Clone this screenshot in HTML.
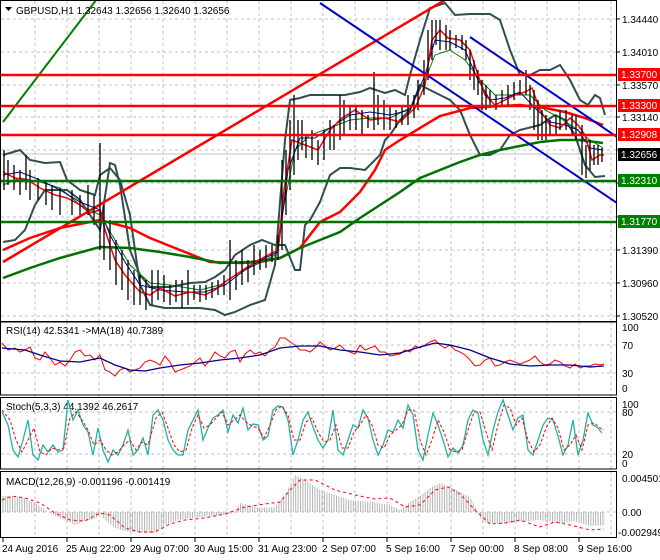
<!DOCTYPE html>
<html><head><meta charset="utf-8"><style>
body{margin:0;background:#fff;width:660px;height:560px;overflow:hidden}
svg{display:block;font-family:"Liberation Sans",sans-serif}
text{font-size:10px}
</style></head><body>
<svg width="660" height="560" viewBox="0 0 660 560" xmlns="http://www.w3.org/2000/svg">
<defs>
<pattern id="hs" width="2.4" height="10" patternUnits="userSpaceOnUse"><rect x="0" y="0" width="1" height="10" fill="#b4b4b4"/></pattern>
<clipPath id="cm"><rect x="1" y="1" width="615" height="321"/></clipPath>
</defs>
<g stroke="#c0c0c0" stroke-dasharray="3,3" stroke-width="1">
<path d="M35 1V322M67 1V322M99 1V322M131 1V322M163 1V322M195 1V322M227 1V322M259 1V322M291 1V322M323 1V322M355 1V322M387 1V322M419 1V322M451 1V322M483 1V322M515 1V322M547 1V322M579 1V322M611 1V322"/>
<path d="M35 322V538M67 322V538M99 322V538M131 322V538M163 322V538M195 322V538M227 322V538M259 322V538M291 322V538M323 322V538M355 322V538M387 322V538M419 322V538M451 322V538M483 322V538M515 322V538M547 322V538M579 322V538M611 322V538"/>
<path d="M1 19H616M1 52H616M1 85H616M1 117H616M1 150H616M1 183H616M1 217H616M1 250H616M1 283H616M1 316H616"/>
<path d="M1 345H616M1 373H616M1 412H616M1 454H616M1 512H616"/>
</g>
<g clip-path="url(#cm)" fill="none">
<line x1="1" y1="154" x2="616" y2="154" stroke="#c0c0c0"/>
<!-- bollinger -->
<polyline stroke="#2f4f4f" stroke-width="2" points="3,155 20,150 30,160 45,163 60,162 67,180 80,190 95,195 100,175 110,168 120,180 130,215 140,285 150,305 165,308 180,308 200,308 215,310 225,315 235,312 250,305 265,300 275,265 285,140 290,100 300,98 310,95 330,95 345,95 360,92 370,88 385,93 395,90 405,95 410,75 420,40 430,8 445,3 455,15 470,14 490,14 500,20 510,50 520,75 530,75 540,70 550,70 560,65 570,80 580,100 588,105 595,95 600,98 605,115"/>
<polyline stroke="#2f4f4f" stroke-width="2" points="3,242 15,240 25,230 35,205 45,190 60,190 67,190 80,200 90,215 100,230 110,163 115,165 120,185 130,250 140,275 150,287 170,287 190,283 205,282 215,277 225,270 235,255 250,245 262,240 275,245 285,245 295,270 300,270 305,225 310,220 320,202 330,175 340,168 350,168 365,170 380,155 385,140 390,135 400,120 410,110 420,85 430,90 440,95 450,100 460,110 470,135 480,155 490,155 500,150 510,135 520,130 540,125 555,115 565,120 575,135 585,165 595,177 605,176"/>
<!-- trend lines -->
<line x1="3" y1="122" x2="100" y2="-5" stroke="#008000" stroke-width="2"/>
<line x1="3" y1="262" x2="450" y2="-3" stroke="#ff0000" stroke-width="2.5"/>
<!-- MAs -->
<polyline stroke="#ff0000" stroke-width="2.5" points="3,250 30,238 60,228 100,220 130,228 150,238 180,250 210,262 240,263 260,262 280,258 300,248 320,222 340,212 360,192 375,170 385,150 400,140 420,128 440,116 470,108 500,106 520,105 545,108 565,112 585,118 603,125"/>
<polyline stroke="#007000" stroke-width="2.5" points="3,278 30,268 60,258 100,247 130,248 160,252 190,257 220,263 250,262 280,258 300,248 320,240 340,232 360,218 380,205 400,192 420,178 440,170 460,162 480,155 500,150 520,146 540,142 560,140 580,140 603,143"/>
<polyline stroke="#008000" stroke-width="1" points="3,185 20,178 40,182 60,188 80,205 100,215 115,240 130,265 150,283 170,285 200,290 220,285 240,272 262,262 275,255 285,200 295,150 310,135 330,128 350,120 370,118 390,118 410,108 425,80 435,55 450,50 465,60 480,80 495,95 510,95 530,95 545,110 560,118 575,128 590,140 603,148"/>
<polyline stroke="#00008b" stroke-width="1" points="3,175 20,172 40,180 60,190 80,202 100,210 110,235 125,262 140,285 160,290 185,292 205,292 225,285 245,270 265,258 278,252 288,170 300,138 315,138 330,128 350,115 370,112 390,115 410,110 425,75 435,40 450,42 465,50 478,80 490,100 505,98 520,92 535,108 550,122 565,125 578,130 590,148 603,150"/>
<!-- price -->
<polyline stroke="#ff0000" stroke-width="1.5" points="3,172 15,178 28,180 40,188 55,195 67,198 80,205 90,213 100,210 105,230 115,260 125,275 140,292 150,295 160,288 175,296 190,292 205,295 215,290 225,282 240,272 255,262 268,255 278,250 284,190 292,140 305,145 318,150 330,130 342,118 355,110 370,120 385,118 400,122 415,108 425,85 432,40 440,30 448,38 460,40 470,50 478,75 485,95 495,105 505,100 515,95 525,92 532,88 540,110 550,125 560,128 570,118 578,125 585,135 592,160 600,155 604,155"/>
<g stroke="#000" stroke-width="1.3">
<path d="M4 150V190M8 160V185M14 165V190M20 170V195M26 155V190M30 170V200M38 178V200M46 180V205M52 185V210M60 188V215M72 190V215M80 195V215M88 185V215M94 195V225M100 143V250M104 205V260M110 220V270M116 240V285M122 250V290M128 260V300M134 270V305M140 275V305M146 280V310M152 270V305M158 270V300M164 275V302M170 285V305M176 280V302M182 280V308M188 270V305M194 285V300M200 285V302M206 285V300M212 282V298M218 280V295M224 275V295M230 240V300M236 260V290M242 250V285M248 260V282M254 245V275M260 250V270M266 245V268M272 245V262M278 235V260M282 160V250M286 150V215M290 120V190M294 95V175M298 120V160M302 120V150M306 135V158M312 130V160M318 140V165M324 130V160M330 120V150M334 125V150M340 95V140M344 100V135M350 105V130M356 105V130M362 110V135M368 115V128M374 72V130M378 95V125M384 100V130M390 105V130M396 110V128M402 105V125M408 95V125M414 95V118M418 80V110M424 60V95M428 30V80M432 20V60M436 20V45M440 20V50M446 25V50M450 30V50M456 35V48M462 35V50M466 40V60M470 50V80M474 60V90M478 70V95M482 80V110M486 85V110M490 90V105M496 95V110M502 90V105M508 85V105M514 82V100M520 80V95M526 70V95M530 85V110M534 90V130M538 100V140M542 110V140M546 115V140M550 120V135M556 115V135M560 110V130M566 110V130M572 115V135M576 115V140M582 125V175M586 145V178M590 140V170M594 145V165M598 145V165M602 148V162"/>
</g>
<!-- blue channel -->
<line x1="320" y1="3" x2="617" y2="203" stroke="#0000cc" stroke-width="2"/>
<line x1="470" y1="37" x2="617" y2="137" stroke="#0000cc" stroke-width="2"/>
<!-- horizontal levels -->
<g stroke-width="2.5">
<line x1="1" y1="75" x2="616" y2="75" stroke="#ff0000"/>
<line x1="1" y1="106" x2="616" y2="106" stroke="#ff0000"/>
<line x1="1" y1="135" x2="616" y2="135" stroke="#ff0000"/>
<line x1="1" y1="181" x2="616" y2="181" stroke="#007000"/>
<line x1="1" y1="222" x2="616" y2="222" stroke="#007000"/>
</g>
</g>
<!-- frames -->
<g fill="none" stroke="#000" stroke-width="1">
<rect x="0.5" y="0.5" width="616" height="321.5"/>
<rect x="0.5" y="321.5" width="616" height="73.5"/>
<rect x="0.5" y="397.5" width="616" height="71.5"/>
<rect x="0.5" y="471.5" width="616" height="66"/>
</g>
<g stroke="#000"><path d="M3 538V542M67 538V542M131 538V542M195 538V542M259 538V542M323 538V542M387 538V542M451 538V542M515 538V542M579 538V542"/>
<path d="M617 19h3M617 52h3M617 85h3M617 117h3M617 150h3M617 183h3M617 217h3M617 250h3M617 283h3M617 316h3"/></g>
<!-- title -->
<path d="M5 7h7l-3.5 4z" fill="#000"/>
<text x="16" y="14" fill="#000">GBPUSD,H1  1.32643 1.32656 1.32640 1.32656</text>
<!-- price axis -->
<g fill="#000">
<text x="622" y="23">1.34440</text><text x="622" y="56">1.34010</text><text x="622" y="89">1.33570</text><text x="622" y="121">1.33140</text><text x="622" y="254">1.31390</text><text x="622" y="287">1.30960</text><text x="622" y="320">1.30520</text>
</g>
<rect x="618" y="68" width="42" height="13" fill="#ff0000"/><text x="621" y="78" fill="#fff">1.33700</text>
<rect x="618" y="99" width="42" height="13" fill="#ff0000"/><text x="621" y="109" fill="#fff">1.33300</text>
<rect x="618" y="128" width="42" height="13" fill="#ff0000"/><text x="621" y="138" fill="#fff">1.32908</text>
<rect x="618" y="148" width="42" height="13" fill="#000"/><text x="621" y="158" fill="#fff">1.32656</text>
<rect x="618" y="174" width="42" height="13" fill="#008000"/><text x="621" y="184" fill="#fff">1.32310</text>
<rect x="618" y="215" width="42" height="13" fill="#008000"/><text x="621" y="225" fill="#fff">1.31770</text>
<!-- RSI -->
<text x="6" y="334" fill="#000">RSI(14) 42.5341  -&gt;MA(18) 40.7389</text>
<polyline fill="none" stroke="#ff0000" stroke-width="1" points="2,343 8,350 15,348 20,352 25,350 30,347 35,358 40,360 45,352 50,358 55,365 60,362 65,366 70,360 75,352 80,350 85,356 90,355 95,360 100,355 105,370 110,372 115,376 120,370 125,368 130,372 135,370 140,368 145,362 150,360 155,362 160,365 165,356 170,362 175,372 180,370 185,368 190,366 195,362 200,358 205,366 210,360 215,352 220,356 225,358 230,352 235,350 240,362 245,354 250,350 255,354 260,352 265,356 270,350 275,347 280,338 285,338 290,342 295,345 300,350 305,350 310,352 315,348 320,342 325,346 330,350 335,348 340,345 345,350 350,352 355,354 360,345 365,350 370,348 375,346 380,352 385,352 390,356 395,355 400,354 405,350 410,352 415,346 420,348 425,345 430,342 435,340 440,345 445,348 450,345 455,350 460,352 465,355 470,360 475,366 480,365 485,360 490,358 495,366 500,365 505,362 510,360 515,362 520,364 525,362 530,360 535,356 540,362 545,365 550,364 555,360 560,362 565,366 570,368 575,364 580,368 585,366 590,366 595,364 600,365 604,364"/>
<polyline fill="none" stroke="#00008b" stroke-width="1.3" points="2,348 25,350 40,355 60,361 80,362 100,358 115,365 130,370 145,371 160,368 180,365 200,363 220,360 240,358 260,355 280,348 300,346 320,346 340,350 360,352 380,355 400,353 420,347 435,343 450,345 470,350 490,358 510,364 530,366 550,365 570,365 590,367 604,366"/>
<g fill="#000"><text x="622" y="331">100</text><text x="622" y="349">70</text><text x="622" y="377">30</text><text x="622" y="392">0</text></g>
<!-- Stoch -->
<text x="6" y="410" fill="#000">Stoch(5,3,3) 44.1392 46.2617</text>
<polyline fill="none" stroke="#20b2aa" stroke-width="1.3" points="2,412 8,425 13,450 18,457 23,440 28,420 33,455 38,460 43,445 48,452 53,445 58,452 63,450 68,400 73,420 78,410 83,425 88,432 93,455 98,428 103,450 108,462 113,450 118,455 123,445 128,430 133,455 138,450 143,438 148,455 153,415 158,410 163,420 168,440 173,450 178,455 183,455 188,430 193,420 198,410 203,440 208,428 213,418 218,415 223,410 228,432 233,415 238,423 243,408 248,430 253,424 258,425 263,440 268,436 273,410 278,406 283,407 288,420 293,455 298,440 303,420 308,412 313,427 318,440 323,448 328,440 333,410 338,450 343,455 348,440 353,425 358,428 363,410 368,418 373,440 378,455 383,445 388,430 393,432 398,420 403,428 408,405 413,415 418,450 423,460 428,435 433,413 438,425 443,440 448,457 453,448 458,453 463,445 468,420 473,410 478,413 483,440 488,455 493,430 498,412 503,400 508,415 513,430 518,418 523,415 528,450 533,455 538,440 543,425 548,418 553,420 558,436 563,455 568,445 573,420 578,455 583,440 588,413 593,425 598,428 602,433"/>
<polyline fill="none" stroke="#ff0000" stroke-width="1" stroke-dasharray="3,2" points="2,410 10,420 16,440 22,452 28,440 34,428 40,452 46,455 52,448 58,450 64,448 70,418 76,412 82,420 88,430 94,445 100,440 106,450 112,455 118,452 124,445 130,440 136,450 142,442 148,445 156,418 162,412 168,428 174,445 180,452 186,450 192,428 198,415 204,428 210,425 216,418 222,412 228,425 234,420 240,415 246,422 252,426 258,428 264,438 270,425 276,410 282,406 288,415 294,440 300,440 306,422 312,418 318,432 324,442 330,440 336,425 342,448 348,448 354,432 360,425 366,415 372,425 378,445 384,448 390,435 396,430 402,425 408,410 414,410 420,440 426,455 432,440 438,420 444,432 450,450 456,452 462,450 468,430 474,412 480,412 486,432 492,450 498,425 504,405 510,408 516,425 522,418 528,440 534,452 540,445 546,428 552,418 558,428 564,450 570,445 576,435 582,450 588,425 594,423 600,428 604,430"/>
<g fill="#000"><text x="622" y="408">100</text><text x="622" y="416">80</text><text x="622" y="458">20</text><text x="622" y="467">0</text></g>
<!-- MACD -->
<text x="6" y="485" fill="#000">MACD(12,26,9) -0.001196 -0.001419</text>
<polygon fill="url(#hs)" points="2,512 2,496 15,496 25,499 35,503 45,510 55,516 65,520 75,525 85,521 95,519 100,513 105,520 115,528 125,531 140,533 155,533 165,525 175,521 185,519 200,517 215,516 230,514 235,512 240,503 260,508 275,507 285,495 295,475 305,480 320,490 335,495 350,500 370,502 390,505 400,510 410,502 420,496 430,488 440,483 450,487 470,497 478,512 482,522 500,524 520,522 540,520 560,524 575,521 590,526 605,525 605,512"/>
<polyline fill="none" stroke="#ff0000" stroke-width="1" stroke-dasharray="3,3" points="2,500 12,496 25,498 40,503 55,513 70,520 85,521 100,513 110,515 125,528 140,532 155,532 170,524 185,520 205,518 225,514 245,507 265,504 280,502 290,490 300,480 315,480 335,490 355,495 375,499 390,498 405,507 420,505 435,490 448,487 460,494 475,510 490,524 505,523 520,520 540,527 555,522 570,525 590,530 604,529"/>
<g fill="#000"><text x="622" y="482">0.004501</text><text x="622" y="516">0.00</text><text x="618" y="536">-0.002949</text></g>
<!-- dates -->
<g fill="#000"><text x="2" y="552">24 Aug 2016</text><text x="66" y="552">25 Aug 22:00</text><text x="130" y="552">29 Aug 07:00</text><text x="194" y="552">30 Aug 15:00</text><text x="258" y="552">31 Aug 23:00</text><text x="322" y="552">2 Sep 07:00</text><text x="386" y="552">5 Sep 16:00</text><text x="450" y="552">7 Sep 00:00</text><text x="514" y="552">8 Sep 08:00</text><text x="578" y="552">9 Sep 16:00</text></g>
</svg>
</body></html>
